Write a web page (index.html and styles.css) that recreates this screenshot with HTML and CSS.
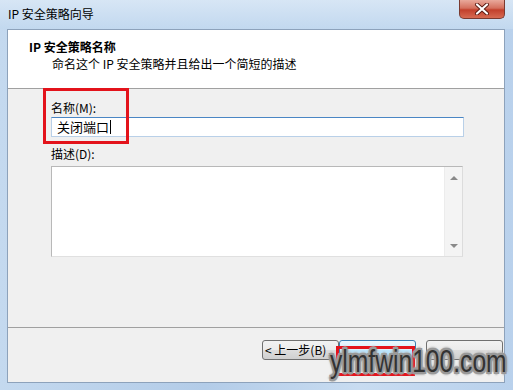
FILE: index.html
```html
<!DOCTYPE html>
<html lang="zh-CN">
<head>
    <meta charset="UTF-8">
    <title>IP 安全策略向导</title>
    <link rel="stylesheet" href="styles.css">
</head>
<body>
    <div class="window">
        <div class="titlebar">
            <span class="title">IP 安全策略向导</span>
            <div class="close-btn">
                <svg width="16" height="12" viewBox="0 0 16 12">
                    <path d="M3 1.5 L13 10.5 M13 1.5 L3 10.5" stroke="#5a1a12" stroke-width="4" stroke-linecap="round"/>
                    <path d="M3 1.5 L13 10.5 M13 1.5 L3 10.5" stroke="#ffffff" stroke-width="2.2" stroke-linecap="round"/>
                </svg>
            </div>
        </div>
        <div class="client">
            <div class="header">
                <div class="header-title">IP 安全策略名称</div>
                <div class="header-sub">命名这个 IP 安全策略并且给出一个简短的描述</div>
            </div>
            <div class="body">
                <label class="field-label">名称(M):</label>
                <div class="input">关闭端口<span class="caret"></span></div>
                <label class="field-label desc-label">描述(D):</label>
                <div class="textarea">
                    <div class="scrollbar">
                        <span class="arrow up"></span>
                        <span class="arrow down"></span>
                    </div>
                </div>
            </div>
            <div class="footer">
                <div class="btn">&lt; 上一步(B)</div>
                <!-- next / cancel sit under the watermark -->
                <div class="btn btn-default"></div>
                <div class="btn btn-cancel"></div>
            </div>
        </div>
        <div class="mark mark-name"></div>
        <div class="mark mark-next"></div>
        <div class="watermark">ylmfwin100.com</div>
    </div>
</body>
</html>
```

FILE: styles.css
```css
body {
    margin: 0;
    background: #b7cfea;
    font-family: "Noto Sans CJK SC", "DejaVu Sans", sans-serif;
    font-size: 12px;
    color: #000;
}
.window {
    position: relative;
    width: 513px;
    height: 390px;
    display: flex;
    flex-direction: column;
    overflow: hidden;
    background: linear-gradient(to right, #c4d9ef, #b3cce8 40%, #c8dcf1 70%, #b9d1ec);
}
.titlebar {
    height: 29px;
    display: flex;
    align-items: flex-start;
    background: linear-gradient(to bottom, #d7e6f5, #c2d8ef);
}
.title {
    margin: 6px 0 0 8px;
    line-height: 16px;
    font-size: 12px;
    color: #000;
}
.close-btn {
    margin-left: auto;
    margin-right: 8px;
    width: 44px;
    height: 18px;
    border: 1px solid #7a3a30;
    border-top: none;
    border-radius: 0 0 5px 5px;
    background: linear-gradient(to bottom, #e9a99b, #d4705e 45%, #c2402c 55%, #d66a52);
    display: flex;
    align-items: center;
    justify-content: center;
}
.client {
    flex: 1;
    margin: 0 8px 7px 7px;
    background: #f0f0f0;
    border: 1px solid #8da2bb;
    display: flex;
    flex-direction: column;
}
.header {
    height: 58px;
    background: #fff;
    border-bottom: 1px solid #a0a0a0;
    padding-left: 21px;
}
.header-title {
    margin-top: 10px;
    font-weight: bold;
    line-height: 14px;
}
.header-sub {
    margin-top: 3px;
    padding-left: 23px;
    line-height: 14px;
}
.body {
    flex: 1;
    padding: 12px 0 0 43px;
    display: flex;
    flex-direction: column;
}
.field-label {
    line-height: 14px;
}
.input {
    margin-top: 2px;
    width: 406px;
    height: 18px;
    border: 1px solid #b9d0e8;
    border-top-color: #4a86c4;
    background: #fff;
    padding-left: 5px;
    line-height: 18px;
    font-size: 13px;
    display: flex;
    align-items: center;
}
.caret {
    width: 1px;
    height: 14px;
    margin-left: 1px;
    background: #000;
}
.desc-label {
    margin-top: 10px;
}
.textarea {
    margin-top: 5px;
    width: 410px;
    height: 89px;
    border: 1px solid #b8b8b8;
    border-right-color: #dcdcdc;
    border-bottom-color: #e0e0e0;
    background: #fff;
    display: flex;
    justify-content: flex-end;
}
.scrollbar {
    width: 17px;
    background: #f4f4f4;
    border-left: 1px solid #ececec;
    display: flex;
    flex-direction: column;
    justify-content: space-between;
    align-items: center;
    padding: 9px 0 8px;
}
.arrow {
    width: 0;
    height: 0;
    border-left: 4px solid transparent;
    border-right: 4px solid transparent;
}
.arrow.up {
    border-bottom: 4px solid #8a8a8a;
}
.arrow.down {
    border-top: 4px solid #8a8a8a;
}
.footer {
    height: 42px;
    border-top: 1px solid #a0a0a0;
    display: flex;
    align-items: flex-start;
    padding: 12px 0 0 254px;
}
.btn {
    width: 73px;
    height: 18px;
    border: 1px solid #707070;
    border-radius: 3px;
    background: linear-gradient(to bottom, #f2f2f2, #ebebeb 50%, #dddddd 51%, #cfcfcf);
    line-height: 18px;
    padding-left: 2px;
    box-sizing: content-box;
    white-space: nowrap;
}
.btn-default {
    border-color: #3c7fb1;
    background: linear-gradient(to bottom, #eaf6fd, #d9f0fc 50%, #bee6fd 51%, #a7d9f5);
}
.btn-cancel {
    margin-left: 10px;
}
.mark {
    position: absolute;
    border: 3px solid #e3131b;
}
.mark-name {
    left: 43px;
    top: 88px;
    width: 80px;
    height: 50px;
}
.mark-next {
    left: 336px;
    top: 346px;
    width: 73px;
    height: 24px;
}
.watermark {
    position: absolute;
    left: 330px;
    top: 342px;
    font-family: "Liberation Sans", sans-serif;
    font-size: 32px;
    line-height: 38px;
    color: #333;
    white-space: nowrap;
    transform: scaleX(0.77);
    transform-origin: left top;
    text-shadow: 2px 0 0 #999, -2px 0 0 #999, 0 2px 0 #999, 0 -2px 0 #999,
        2px 2px 0 #999, -2px -2px 0 #999, 2px -2px 0 #999, -2px 2px 0 #999,
        3px 0 2px #b0b0b0, -3px 0 2px #b0b0b0, 0 3px 2px #b0b0b0, 0 -3px 2px #b0b0b0;
}
```
